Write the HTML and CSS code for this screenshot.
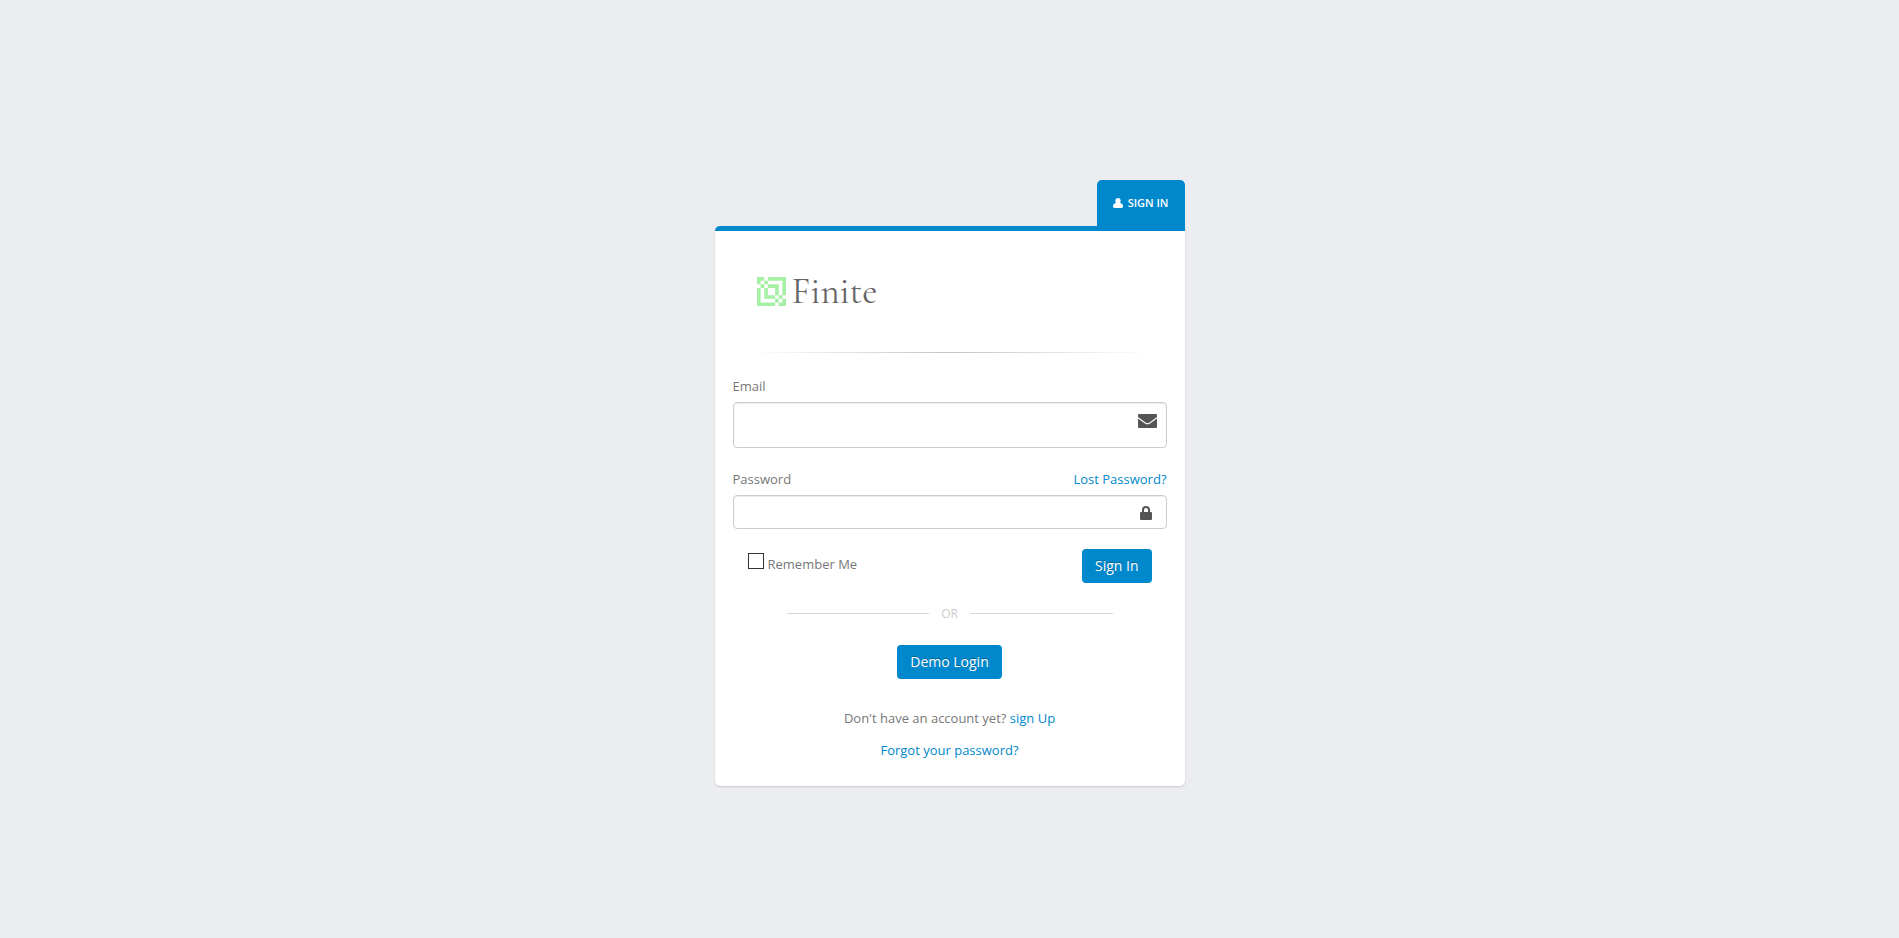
FILE: index.html
```html
<!DOCTYPE html>
<html lang="en">
<head>
<meta charset="utf-8">
<title>Finite - Sign In</title>
<link rel="stylesheet" href="styles.css">
</head>
<body>
<main class="sign">
  <h1 class="tab">
    <svg class="tab-icon" viewBox="0 0 10 10" aria-hidden="true"><path d="M5 0C6.600 0 7.700 1.200 7.700 2.700 7.700 3.700 7.300 4.600 6.600 5.100 9 5.300 10 6.500 10 8.600Q10 10 8.500 10h-7Q0 10 0 8.600C0 6.500 1 5.300 3.400 5.100 2.700 4.600 2.300 3.700 2.300 2.700 2.300 1.200 3.400 0 5 0z"/></svg>
    Sign In
  </h1>
  <form class="card">
    <div class="logo">
      <svg class="logo-mark" viewBox="0 0 8 8" aria-hidden="true"><path d="M0 0h2v1H1v1H0zM3 0h5v5H7V1H3zM2 1h1v1H2zM1 2h1v1H1zM3 2h3v3H5V3H3zM0 3h1v4h4v1H0zM2 3h1v2h2v1H2zM6 5h1v1H6zM5 6h1v1H5zM7 6h1v2H6V7h1z"/></svg>
      <span class="logo-name">Finite</span>
    </div>
    <hr class="rule">
    <div class="field">
      <div class="field-head"><label for="email">Email</label></div>
      <div class="control">
        <input class="input input-large" id="email" type="email">
        <svg class="mail" viewBox="0 0 19 14" aria-hidden="true"><path d="M1 0h17q1 0 1 1v2L11.500 8.500q-2 1.500-4 0L0 3V1q0-1 1-1zM0 4.400l7 5q2.500 1.700 5 0l7-5V13q0 1-1 1H1q-1 0-1-1z"/></svg>
      </div>
    </div>
    <div class="field">
      <div class="field-head"><label for="password">Password</label><a href="#">Lost Password?</a></div>
      <div class="control">
        <input class="input" id="password" type="password">
        <svg class="lock" viewBox="0 0 12 14" aria-hidden="true"><path fill-rule="evenodd" d="M2 6V4a4 4 0 0 1 8 0v2h1q1 0 1 1v6q0 1-1 1H1q-1 0-1-1V7q0-1 1-1zM4 6h4V4a2 2 0 0 0-4 0z"/></svg>
      </div>
    </div>
    <div class="actions">
      <label class="remember"><input class="check" type="checkbox"><span>Remember Me</span></label>
      <button class="btn" type="submit">Sign In</button>
    </div>
    <div class="or">OR</div>
    <button class="btn demo" type="button">Demo Login</button>
    <p class="note">Don't have an account yet? <a href="#">sign Up</a></p>
    <p class="note"><a href="#">Forgot your password?</a></p>
  </form>
</main>
</body>
</html>
```
FILE: styles.css
```css
* { box-sizing: border-box; }

body {
  margin: 0;
  min-height: 100vh;
  display: flex;
  justify-content: center;
  align-items: center;
  padding: 27px 0 0;
  background: #ecedf0;
  color: #777;
  font: 13px/22px "Open Sans", Arial, sans-serif;
}

a { color: #08c; text-decoration: none; }

.sign {
  width: 100%;
  max-width: 470px;
  display: flex;
  flex-direction: column;
}

.tab {
  align-self: flex-end;
  display: flex;
  align-items: center;
  gap: 5px;
  margin: 0;
  padding: 12px 16px;
  border-radius: 5px 5px 0 0;
  background: #08c;
  color: #fff;
  font-size: 11px;
  font-weight: 600;
  line-height: 22px;
  text-transform: uppercase;
}

.tab-icon { width: 10px; height: 10px; fill: #fff; }

.card {
  padding: 33px 18px 25px;
  border-top: 5px solid #08c;
  border-radius: 5px 0 5px 5px;
  background: #fff;
  box-shadow: 0 1px 2px rgba(0, 0, 0, 0.15);
}

.logo {
  display: flex;
  align-items: center;
  gap: 6px;
  height: 56px;
  padding-left: 24px;
}

.logo-mark { width: 29px; height: 29px; fill: #a5f0a5; }

.logo-name {
  color: #666;
  font: 37px/56px "Cormorant Garamond", "Liberation Serif", serif;
}

.rule {
  height: 1px;
  margin: 32px 0 22px;
  border: 0;
  background: linear-gradient(to right, transparent 4%, #c3c4c4 50%, transparent 96%);
}

.field { margin-bottom: 20px; }

.field-head {
  display: flex;
  justify-content: space-between;
  padding-bottom: 5px;
}

.control { position: relative; }

.input {
  display: block;
  width: 100%;
  height: 34px;
  padding: 6px 48px 6px 12px;
  border: 1px solid #ccc;
  border-radius: 4px;
  background: #fff;
  box-shadow: inset 0 1px 1px rgba(0, 0, 0, 0.08);
  color: #555;
  font: inherit;
}

.input-large { height: 46px; }

.mail, .lock { position: absolute; fill: #555; pointer-events: none; }
.mail { top: 12px; right: 10px; width: 19px; height: 14px; }
.lock { top: 11px; right: 15px; width: 12px; height: 14px; }

.actions {
  display: flex;
  justify-content: space-between;
  padding: 0 15px;
}

.remember { display: flex; gap: 4px; }
.remember span { padding-top: 4px; }

.check {
  appearance: none;
  width: 16px;
  height: 16px;
  margin: 4px 0 0;
  border: 1px solid #333;
  background: #fff;
}

.check:checked { background: #08c; }

.btn {
  height: 34px;
  padding: 0 13px;
  border: 0;
  border-radius: 4px;
  background: #08c;
  color: #fff;
  font: 14px/20px "Open Sans", Arial, sans-serif;
  text-shadow: 0 -1px 0 rgba(0, 0, 0, 0.25);
}

.or {
  display: flex;
  align-items: center;
  gap: 12px;
  margin: 20px 54px;
  color: #ccc;
  font-size: 12px;
}

.or::before, .or::after {
  content: "";
  flex: 1;
  height: 1px;
  background: #d8d8d8;
}

.demo { display: block; margin: 0 auto 28px; }

.note { margin: 0 0 10px; text-align: center; }
.note:last-child { margin: 0; }
```
